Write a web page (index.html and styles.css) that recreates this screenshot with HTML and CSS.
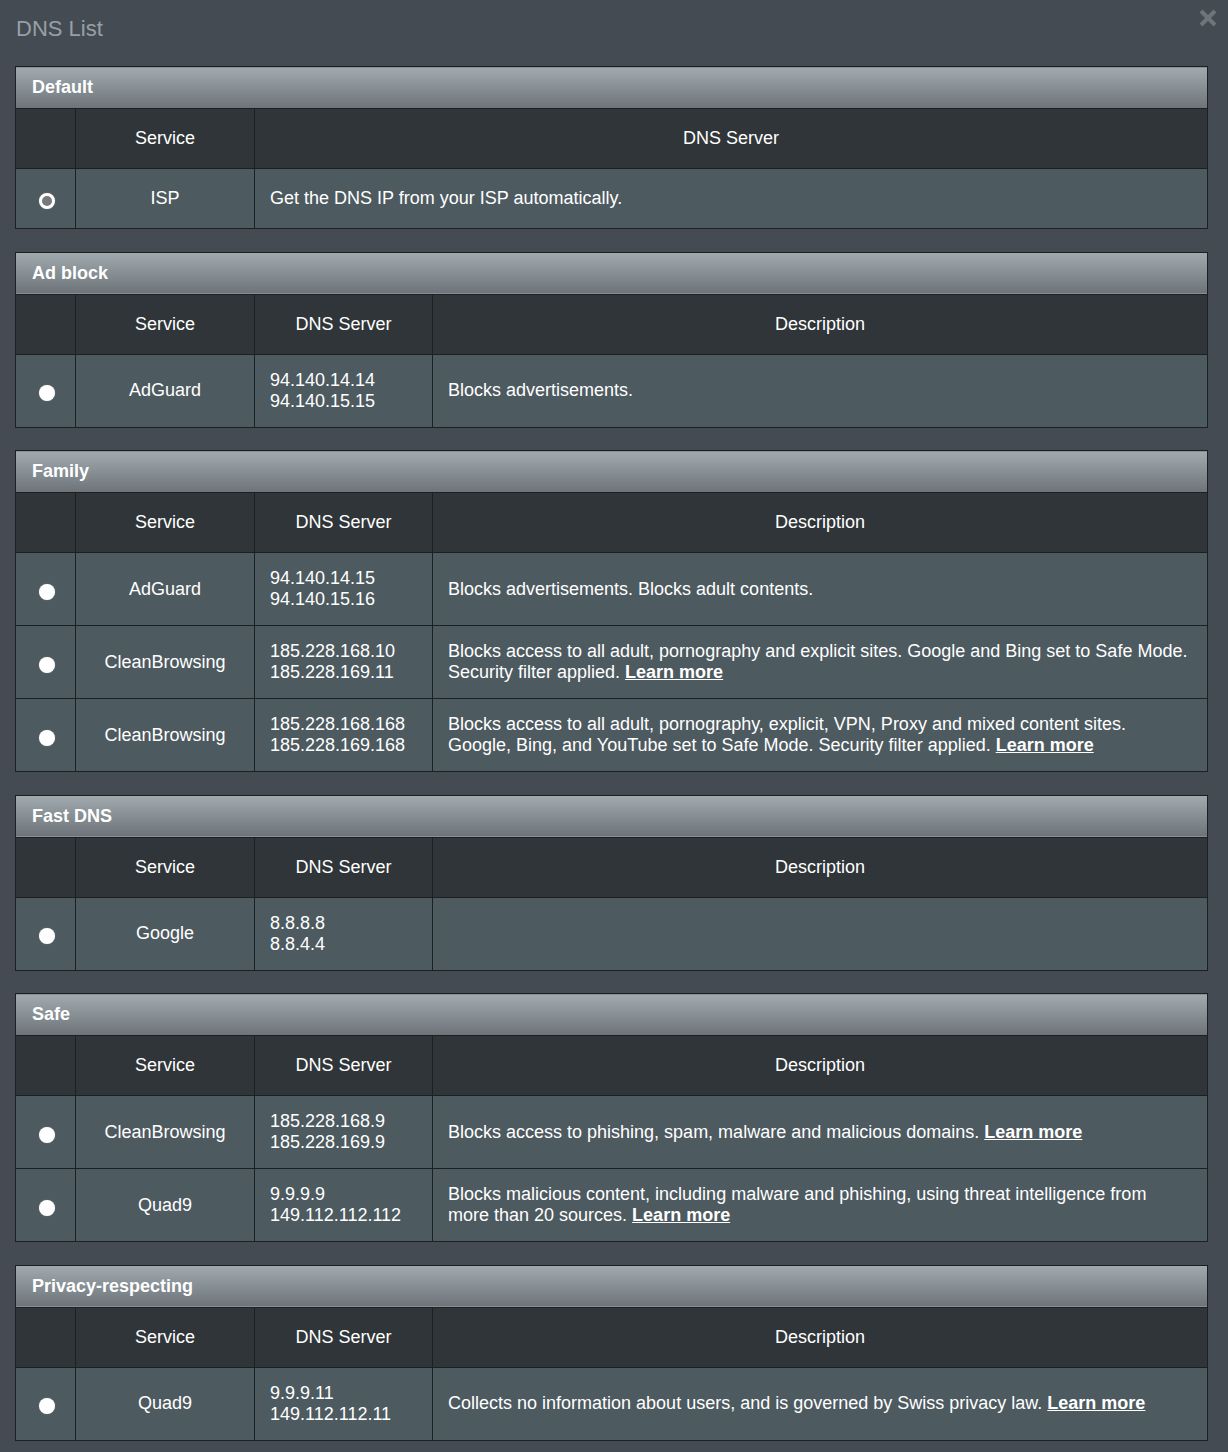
FILE: index.html
```html
<!DOCTYPE html>
<html>
<head>
<meta charset="utf-8">
<link rel="stylesheet" href="styles.css">
</head>
<body>
<div class="dialog">
  <div class="title-bar">
    <div class="title">DNS List</div>
    <svg class="close" width="18" height="18" viewBox="0 0 18 18"><path d="M2 2 L16 16 M16 2 L2 16" stroke="#6e757b" stroke-width="4" stroke-linecap="butt"/></svg>
  </div>

  <table class="dns">
    <colgroup><col class="c-radio"><col class="c-svc"><col></colgroup>
    <tr><th class="cap" colspan="3">Default</th></tr>
    <tr class="head"><th></th><th>Service</th><th>DNS Server</th></tr>
    <tr class="row"><td class="r"><span class="radio on"></span></td><td class="svc">ISP</td><td class="txt">Get the DNS IP from your ISP automatically.</td></tr>
  </table>

  <table class="dns">
    <colgroup><col class="c-radio"><col class="c-svc"><col class="c-ip"><col></colgroup>
    <tr><th class="cap" colspan="4">Ad block</th></tr>
    <tr class="head"><th></th><th>Service</th><th>DNS Server</th><th>Description</th></tr>
    <tr class="row"><td class="r"><span class="radio"></span></td><td class="svc">AdGuard</td><td class="txt">94.140.14.14<br>94.140.15.15</td><td class="txt">Blocks advertisements.</td></tr>
  </table>

  <table class="dns">
    <colgroup><col class="c-radio"><col class="c-svc"><col class="c-ip"><col></colgroup>
    <tr><th class="cap" colspan="4">Family</th></tr>
    <tr class="head"><th></th><th>Service</th><th>DNS Server</th><th>Description</th></tr>
    <tr class="row"><td class="r"><span class="radio"></span></td><td class="svc">AdGuard</td><td class="txt">94.140.14.15<br>94.140.15.16</td><td class="txt">Blocks advertisements. Blocks adult contents.</td></tr>
    <tr class="row"><td class="r"><span class="radio"></span></td><td class="svc">CleanBrowsing</td><td class="txt">185.228.168.10<br>185.228.169.11</td><td class="txt">Blocks access to all adult, pornography and explicit sites. Google and Bing set to Safe Mode. Security filter applied. <a href="#">Learn more</a></td></tr>
    <tr class="row"><td class="r"><span class="radio"></span></td><td class="svc">CleanBrowsing</td><td class="txt">185.228.168.168<br>185.228.169.168</td><td class="txt">Blocks access to all adult, pornography, explicit, VPN, Proxy and mixed content sites. Google, Bing, and YouTube set to Safe Mode. Security filter applied. <a href="#">Learn more</a></td></tr>
  </table>

  <table class="dns">
    <colgroup><col class="c-radio"><col class="c-svc"><col class="c-ip"><col></colgroup>
    <tr><th class="cap" colspan="4">Fast DNS</th></tr>
    <tr class="head"><th></th><th>Service</th><th>DNS Server</th><th>Description</th></tr>
    <tr class="row"><td class="r"><span class="radio"></span></td><td class="svc">Google</td><td class="txt">8.8.8.8<br>8.8.4.4</td><td class="txt"></td></tr>
  </table>

  <table class="dns">
    <colgroup><col class="c-radio"><col class="c-svc"><col class="c-ip"><col></colgroup>
    <tr><th class="cap" colspan="4">Safe</th></tr>
    <tr class="head"><th></th><th>Service</th><th>DNS Server</th><th>Description</th></tr>
    <tr class="row"><td class="r"><span class="radio"></span></td><td class="svc">CleanBrowsing</td><td class="txt">185.228.168.9<br>185.228.169.9</td><td class="txt">Blocks access to phishing, spam, malware and malicious domains. <a href="#">Learn more</a></td></tr>
    <tr class="row"><td class="r"><span class="radio"></span></td><td class="svc">Quad9</td><td class="txt">9.9.9.9<br>149.112.112.112</td><td class="txt">Blocks malicious content, including malware and phishing, using threat intelligence from more than 20 sources. <a href="#">Learn more</a></td></tr>
  </table>

  <table class="dns">
    <colgroup><col class="c-radio"><col class="c-svc"><col class="c-ip"><col></colgroup>
    <tr><th class="cap" colspan="4">Privacy-respecting</th></tr>
    <tr class="head"><th></th><th>Service</th><th>DNS Server</th><th>Description</th></tr>
    <tr class="row"><td class="r"><span class="radio"></span></td><td class="svc">Quad9</td><td class="txt">9.9.9.11<br>149.112.112.11</td><td class="txt">Collects no information about users, and is governed by Swiss privacy law. <a href="#">Learn more</a></td></tr>
  </table>
</div>
</body>
</html>
```

FILE: styles.css
```css
html, body {
  margin: 0;
  padding: 0;
  background: #454b52;
}
body {
  font-family: "Liberation Sans", Arial, sans-serif;
  color: #ffffff;
}
.dialog {
  padding: 14px 20px 0 15px;
}
.title-bar {
  display: flex;
  justify-content: space-between;
  align-items: flex-start;
  height: 52px;
}
.title {
  font-size: 22px;
  line-height: 30px;
  color: #97a0a6;
  padding-left: 1px;
}
.close {
  display: block;
  margin-right: -9px;
  margin-top: -5px;
}
.dns {
  width: 100%;
  border-collapse: collapse;
  border: 1px solid #1b2023;
  margin-bottom: 22.5px;
  font-size: 18px;
  line-height: 21px;
}
.c-radio { width: 60px; }
.c-svc { width: 179px; }
.c-ip { width: 178px; }
.dns th, .dns td {
  border: 1px solid #1b2023;
  padding: 0;
}
.dns th.cap {
  height: 41px;
  text-align: left;
  padding: 0 16px;
  font-weight: bold;
  font-size: 18px;
  background: linear-gradient(#a1aaaf, #6c7479);
  color: #ffffff;
}
.head th {
  height: 59px;
  background: #2f3538;
  font-weight: normal;
  text-align: center;
}
.row td {
  height: 29px;
  background: #4d5a60;
  vertical-align: middle;
}
.row td.txt {
  padding: 15px 15px;
}
.row td.svc {
  text-align: center;
}
.row td.r {
  text-align: center;
}
.radio {
  display: inline-block;
  width: 16px;
  height: 16px;
  border-radius: 50%;
  background: #ffffff;
  box-shadow: 0 0 1px #9aa0a3;
  vertical-align: middle;
  position: relative;
  top: 2px;
  left: 1px;
}
.radio.on {
  box-sizing: border-box;
  background: #77797b;
  border: 3px solid #ffffff;
}
.dns a {
  color: #ffffff;
  font-weight: bold;
  text-decoration: underline;
}
```
